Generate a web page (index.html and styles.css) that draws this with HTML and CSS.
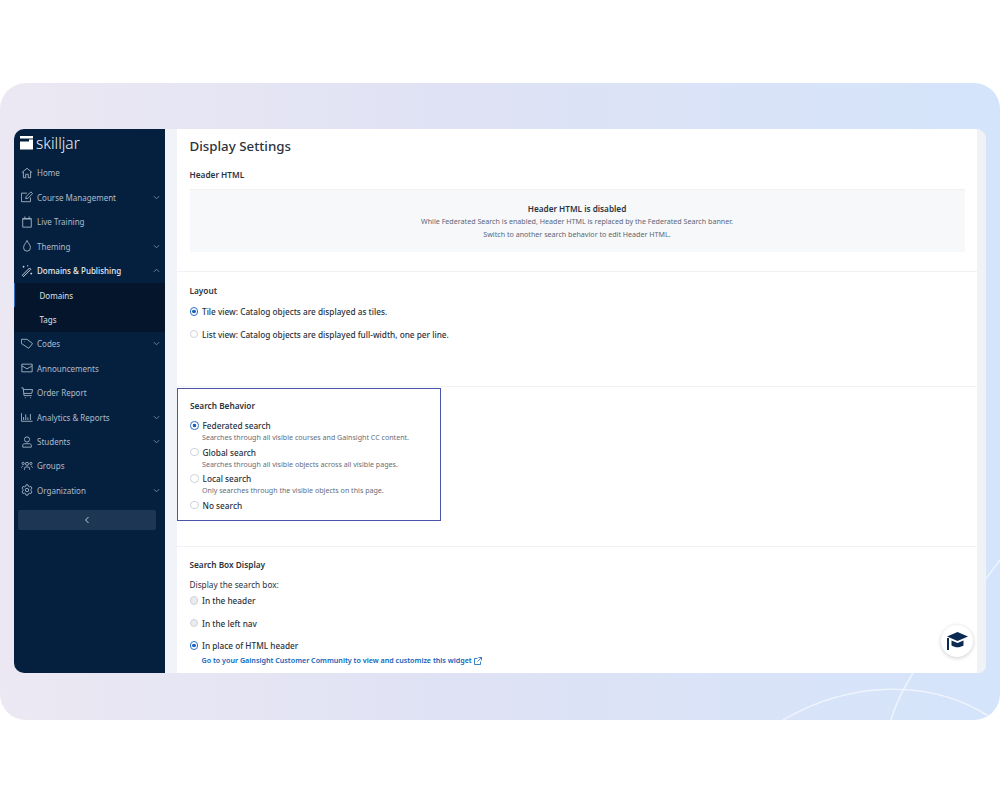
FILE: index.html
```html
<!DOCTYPE html>
<html lang="en">
<head>
    <meta charset="UTF-8">
    <title>Display Settings</title>
    <link rel="stylesheet" href="styles.css">
</head>
<body>
    <div class="banner">
        <svg class="banner-lines" width="1000" height="637" viewBox="0 0 1000 637">
            <path d="M783 637 C 850 598, 930 595, 990 634" />
            <path d="M913 590 C 903 606, 896 620, 891 637" />
            <path d="M985 497 L 1000 477" />
        </svg>
        <div class="window">
            <nav class="sidebar">
                <div class="logo">
                    <svg class="logo-mark" width="13" height="14" viewBox="0 0 13 14"><path d="M0 0h13v2.500H0zM0 5.500h9V3.500h4V13.500H0z" /></svg>
                    <span>skilljar</span>
                </div>
                <a class="nav-item">
                    <svg class="nav-icon" viewBox="0 0 14 14"><path d="M1 6.500 7 1.500l6 5M2.800 5.500V12.500h2.700V8.500h3v4h2.700V5.500" /></svg>
                    <span>Home</span>
                </a>
                <a class="nav-item">
                    <svg class="nav-icon" viewBox="0 0 14 14"><path d="M11 7.500V12.500H.5V2.500H7M5.500 9l.5-2.500 5.500-5.500 2 2-5.500 5.500z" /></svg>
                    <span>Course Management</span>
                    <svg class="chevron" viewBox="0 0 8 8"><path d="M1 2.500 4 5.500 7 2.500" /></svg>
                </a>
                <a class="nav-item">
                    <svg class="nav-icon" viewBox="0 0 14 14"><path d="M2 3h10V13H2zM4.500 .5v2.500M9.500 .5v2.500M2 3.500h10" /></svg>
                    <span>Live Training</span>
                </a>
                <a class="nav-item">
                    <svg class="nav-icon" viewBox="0 0 14 14"><path d="M7 .5C5.500 4 3 5.800 3 9a4 4 0 0 0 8 0C11 5.800 8.500 4 7 .5z" /></svg>
                    <span>Theming</span>
                    <svg class="chevron" viewBox="0 0 8 8"><path d="M1 2.500 4 5.500 7 2.500" /></svg>
                </a>
                <a class="nav-item active">
                    <svg class="nav-icon" viewBox="0 0 14 14"><path d="M1.500 12 10 3.500 11.500 5 3 13.500zM2 2h2M3 1v2M11 10h2M12 9v2M7 1h1.500" /></svg>
                    <span>Domains &amp; Publishing</span>
                    <svg class="chevron" viewBox="0 0 8 8"><path d="M1 5.500 4 2.500 7 5.500" /></svg>
                </a>
                <div class="sub-nav">
                    <a class="sub-item current">Domains</a>
                    <a class="sub-item">Tags</a>
                </div>
                <a class="nav-item">
                    <svg class="nav-icon" viewBox="0 0 14 14"><path d="M.5 1.500h6.500l6.500 5-4.500 5.500L.5 6.500zM3.500 4h.5" /></svg>
                    <span>Codes</span>
                    <svg class="chevron" viewBox="0 0 8 8"><path d="M1 2.500 4 5.500 7 2.500" /></svg>
                </a>
                <a class="nav-item">
                    <svg class="nav-icon" viewBox="0 0 14 14"><path d="M1 2.500h12v9H1zM1 4.500 7 8l6-3.500" /></svg>
                    <span>Announcements</span>
                </a>
                <a class="nav-item">
                    <svg class="nav-icon" viewBox="0 0 14 14"><path d="M.5 1h2l1 9h9M2.800 3H13.500l-1 4.500H3.300M4.500 12.500h1M10.500 12.500h1" /></svg>
                    <span>Order Report</span>
                </a>
                <a class="nav-item">
                    <svg class="nav-icon" viewBox="0 0 14 14"><path d="M.5 2.500v9.500h13M3 7v3.500M5.500 4v6.500M8 7.500v3M11 3.500v7" /></svg>
                    <span>Analytics &amp; Reports</span>
                    <svg class="chevron" viewBox="0 0 8 8"><path d="M1 2.500 4 5.500 7 2.500" /></svg>
                </a>
                <a class="nav-item">
                    <svg class="nav-icon" viewBox="0 0 14 14"><circle cx="7" cy="4" r="3" /><path d="M2 13v-2c0-1.200 1-2 2-2h6c1 0 2 .8 2 2v2z" /></svg>
                    <span>Students</span>
                    <svg class="chevron" viewBox="0 0 8 8"><path d="M1 2.500 4 5.500 7 2.500" /></svg>
                </a>
                <a class="nav-item">
                    <svg class="nav-icon" viewBox="0 0 14 14"><circle cx="7" cy="4.500" r="1.800" /><circle cx="2.500" cy="4" r="1.300" /><circle cx="11.500" cy="4" r="1.300" /><path d="M4 11.500V9.500c0-.8.700-1.300 1.500-1.300h3c.8 0 1.500.5 1.500 1.300v2M.5 9c0-1 1-1.700 2-1.700M13.500 9c0-1-1-1.700-2-1.700" /></svg>
                    <span>Groups</span>
                </a>
                <a class="nav-item">
                    <svg class="nav-icon" viewBox="0 0 14 14"><path d="M5.800 1h2.400l.4 1.700 1.500.7 1.500-.6 1.200 2.100-1.200 1.100v2l1.200 1.100-1.200 2.100-1.500-.6-1.500.7-.4 1.700H5.800l-.4-1.700-1.500-.7-1.500.6L1.200 9.100 2.400 8V6L1.200 4.900l1.200-2.100 1.500.6 1.500-.7z" /><circle cx="7" cy="7" r="2" /></svg>
                    <span>Organization</span>
                    <svg class="chevron" viewBox="0 0 8 8"><path d="M1 2.500 4 5.500 7 2.500" /></svg>
                </a>
                <div class="collapse-btn">
                    <svg width="8" height="8" viewBox="0 0 8 8"><path d="M5.500 1 2.500 4 5.500 7" /></svg>
                </div>
            </nav>
            <main class="content">
                <section class="section section-header">
                    <h1>Display Settings</h1>
                    <h2>Header HTML</h2>
                    <div class="disabled-box">
                        <strong>Header HTML is disabled</strong>
                        <p>While Federated Search is enabled, Header HTML is replaced by the Federated Search banner.</p>
                        <p>Switch to another search behavior to edit Header HTML.</p>
                    </div>
                </section>
                <section class="section section-layout">
                    <h2>Layout</h2>
                    <div class="radio-row checked"><i class="radio"></i>Tile view: Catalog objects are displayed as tiles.</div>
                    <div class="radio-row"><i class="radio"></i>List view: Catalog objects are displayed full-width, one per line.</div>
                </section>
                <section class="section section-search">
                    <div class="highlight">
                        <h2>Search Behavior</h2>
                        <div class="option checked">
                            <div class="radio-row"><i class="radio"></i>Federated search</div>
                            <div class="hint">Searches through all visible courses and Gainsight CC content.</div>
                        </div>
                        <div class="option">
                            <div class="radio-row"><i class="radio"></i>Global search</div>
                            <div class="hint">Searches through all visible objects across all visible pages.</div>
                        </div>
                        <div class="option">
                            <div class="radio-row"><i class="radio"></i>Local search</div>
                            <div class="hint">Only searches through the visible objects on this page.</div>
                        </div>
                        <div class="option">
                            <div class="radio-row"><i class="radio"></i>No search</div>
                        </div>
                    </div>
                </section>
                <section class="section section-box">
                    <h2>Search Box Display</h2>
                    <div class="field-label">Display the search box:</div>
                    <div class="radio-row grey"><i class="radio"></i>In the header</div>
                    <div class="radio-row grey"><i class="radio"></i>In the left nav</div>
                    <div class="radio-row checked"><i class="radio"></i>In place of HTML header</div>
                    <a class="community-link">Go to your Gainsight Customer Community to view and customize this widget
                        <svg width="8" height="8" viewBox="0 0 8 8"><path d="M6.500 4.500v3h-6v-6h3M4.500.5h3v3M7.500.5 3.500 4.500" /></svg>
                    </a>
                </section>
            </main>
            <div class="scroll-strip"></div>
            <div class="help-btn">
                <svg width="21" height="18" viewBox="0 0 21 18"><path d="M10.500 0 21 4.500 10.500 9 0 4.500z" /><path d="M4.500 8.500v5c2 1.200 4 1.800 6 1.800s4-.6 6-1.800v-5l-6 2.500z" /><path d="M0 6h2v12H0z" /></svg>
            </div>
        </div>
    </div>
</body>
</html>
```

FILE: styles.css
```css
body { margin: 0; padding: 83px 0 80px; background: #fff; color: #2b3340; font-family: "Noto Sans", sans-serif; font-size: 8.250px; }
h1, h2, p { margin: 0; }

.banner { position: relative; height: 637px; padding: 46px 14px 0; box-sizing: border-box; border-radius: 26px; overflow: hidden; background: linear-gradient(90deg, #ece8f3 0%, #dfe2f4 45%, #d4e4fb 100%); }
.banner-lines { position: absolute; top: 0; left: 0; }
.banner-lines path { fill: none; stroke: #eef4fd; stroke-width: 1.5; }

.window { position: relative; display: flex; height: 544px; border-radius: 10px 10px 8px 10px; overflow: hidden; background: #f0f3f8; }

/* sidebar */
.sidebar { width: 151px; flex-shrink: 0; background: #05203f; color: #aebbca; font-size: 8px; }
.logo { display: flex; align-items: center; gap: 3px; height: 28px; padding-left: 6px; box-sizing: border-box; color: #e8edf3; font-size: 15.500px; font-weight: 300; }
.logo-mark { fill: #fff; }
.nav-item { display: flex; align-items: center; height: 24.400px; padding: 0 5px 0 7px; gap: 5px; }
.nav-item span { flex: 1; }
.nav-item.active { color: #e6ebf1; font-weight: 500; }
.nav-icon { width: 12px; height: 12px; margin-right: -1px; fill: none; stroke: currentColor; stroke-width: 1; flex-shrink: 0; }
.nav-item:first-of-type { margin-top: 3.800px; }
.chevron { width: 7px; height: 7px; margin-left: 1px; fill: none; stroke: #7d8da1; stroke-width: 1; }
.sub-nav { background: #04152c; }
.sub-item { display: block; height: 24.500px; line-height: 24.500px; padding: 1px 0 0 24.500px; color: #dbe2ea; border-left: 1px solid transparent; box-sizing: border-box; }
.sub-item.current { border-left-color: #2a6fc0; }
.collapse-btn { display: flex; align-items: center; justify-content: center; height: 20px; margin: 8px 9px 0 4px; border-radius: 2px; background: #1d3653; }
.collapse-btn svg { fill: none; stroke: #c3cdd9; stroke-width: 1; }

/* settings */
.content { flex: 1; margin-left: 12px; background: #fff; overflow: hidden; }
.section { padding: 0 12.500px; border-bottom: 1px solid #f1f2f4; box-sizing: border-box; }
h1 { padding-top: 8px; font-size: 13.300px; line-height: 19px; font-weight: 500; color: #2b3340; }
h2 { font-size: 8.250px; line-height: 12px; font-weight: 600; color: #2b3340; }
.section-header { height: 143px; }
.section-header h2 { margin-top: 13px; }
.disabled-box { display: flex; flex-direction: column; align-items: center; height: 63px; margin-top: 8px; padding-top: 12px; box-sizing: border-box; background: #f7f8fa; border-top: 1px solid #eef0f2; color: #5d6675; font-size: 7.130px; line-height: 12.500px; }
.disabled-box strong { font-size: 8.200px; font-weight: 600; color: #2b3340; line-height: 13px; }
.section-layout { height: 115px; padding-top: 13px; }
.section-layout .radio-row { margin-top: 8px; }
.section-layout .radio-row + .radio-row { margin-top: 9.500px; }

.radio-row { display: flex; align-items: center; height: 13px; gap: 4px; color: #2b3340; font-weight: 500; }
.radio { width: 8.500px; height: 8.500px; box-sizing: border-box; border-radius: 50%; border: 1px solid #cfd3d9; background: #fff; flex-shrink: 0; }
.checked > .radio, .checked .radio { border-color: #2a6fc9; background: radial-gradient(circle, #1f66c1 0 1.600px, #fff 2.100px); }
.grey .radio { background: #e9ebee; }

.section-search { height: 160px; padding: 1px 0 0; }
.highlight { width: 264px; height: 133px; padding: 10.500px 12px 0; box-sizing: border-box; border: 1px solid #4b55a8; }
.option { height: 26.500px; }
.highlight h2 { margin-bottom: 7.500px; }
.hint { margin-left: 12px; font-size: 7.100px; line-height: 11px; color: #656e7c; }

.section-box { height: 127px; padding-top: 12px; border-bottom: 0; }
.field-label { margin-top: 8px; color: #2b3340; line-height: 12px; }
.section-box .radio-row { margin-top: 3px; }
.section-box .radio-row + .radio-row { margin-top: 9.500px; }
.community-link { display: flex; align-items: center; gap: 2px; margin: 3px 0 0 12px; font-size: 7.150px; line-height: 11px; font-weight: 600; color: #0f63b8; white-space: nowrap; }
.community-link svg { fill: none; stroke: #0f63b8; stroke-width: .8; }

.scroll-strip { width: 9px; flex-shrink: 0; background: #f0f3f6; }
.help-btn { position: absolute; right: 13px; bottom: 16px; display: flex; align-items: center; justify-content: center; width: 32px; height: 32px; border-radius: 50%; background: #fff; box-shadow: 0 1px 4px rgba(0,0,0,.2); }
.help-btn svg { fill: #0b2a52; }
```
